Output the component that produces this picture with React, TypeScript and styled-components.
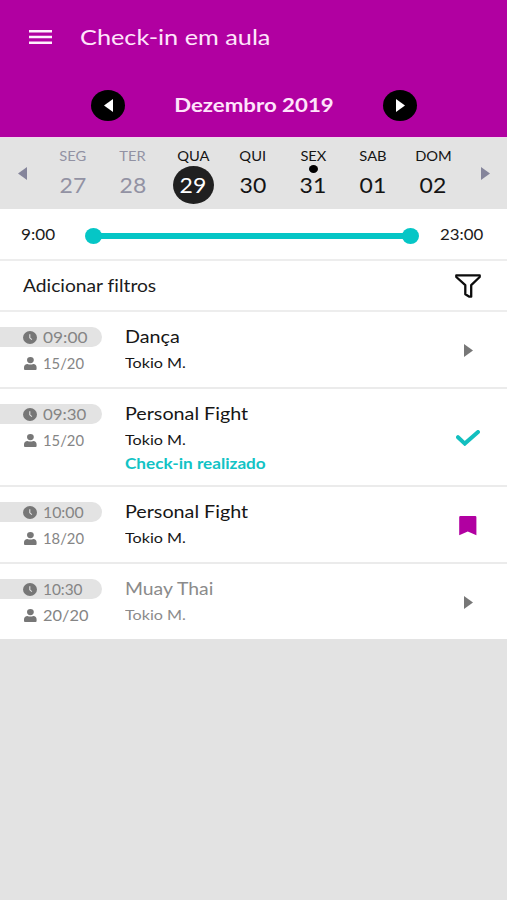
import React from "react";
import styled, { createGlobalStyle, css } from "styled-components";

const purple = "#b100a1";
const teal = "#05c6c6";
const grey = "#e3e3e3";

const GlobalStyle = createGlobalStyle`
  *, *::before, *::after { box-sizing: border-box; }
  body {
    margin: 0;
    background: ${grey};
    font-family: Lato, "Open Sans", sans-serif;
    font-variant-ligatures: none;
    color: #1b1b1b;
  }
  button {
    border: 0;
    padding: 0;
    margin: 0;
    background: none;
    font: inherit;
    color: inherit;
    display: flex;
    align-items: center;
    justify-content: center;
  }
`;

const Screen = styled.main`
  width: 100%;
  min-height: 900px;
  overflow: hidden;
  background: ${grey};
`;

type TextProps = {
  $size: number;
  $stretch?: number;
  $weight?: number;
  $color?: string;
  $line?: number;
  $origin?: string;
};

const Text = styled.span<TextProps>`
  display: block;
  width: max-content;
  white-space: nowrap;
  font-size: ${(p) => p.$size}px;
  line-height: ${(p) => p.$line ?? 24}px;
  font-weight: ${(p) => p.$weight ?? 400};
  color: ${(p) => p.$color ?? "inherit"};
  transform: scaleX(${(p) => p.$stretch ?? 1.1});
  transform-origin: ${(p) => p.$origin ?? "left"} center;
`;

const Header = styled.header`
  height: 137px;
  background: ${purple};
  color: #ffe4fb;
`;

const TitleBar = styled.div`
  display: flex;
  align-items: center;
  height: 74px;
  padding-left: 29px;
  gap: 28px;
`;

const MenuButton = styled.button`
  width: 23px;
  height: 14px;
  svg { display: block; }
`;

const MonthBar = styled.div`
  display: grid;
  grid-template-columns: 34px 1fr 34px;
  align-items: center;
  justify-items: center;
  height: 62px;
  padding: 0 90px 0 91px;
`;

const RoundButton = styled.button`
  width: 34px;
  height: 31px;
  border-radius: 50%;
  background: #000;
`;

const Week = styled.section`
  display: grid;
  grid-template-columns: 43px repeat(7, 60px) 1fr;
  height: 72px;
  border-top: 1px solid #f0d9ee;
`;

const WeekArrow = styled.button`
  height: 70px;
  padding-left: 1px;
`;

const Day = styled.div<{ $muted?: boolean }>`
  display: flex;
  flex-direction: column;
  align-items: center;
  padding-top: 9px;
  color: ${(p) => (p.$muted ? "#9292a3" : "#141414")};
`;

const DayNumber = styled.div<{ $active?: boolean }>`
  position: relative;
  display: flex;
  align-items: center;
  justify-content: center;
  width: 41px;
  height: 38px;
  margin-top: 2px;
  padding-bottom: 1px;
  border-radius: 50%;
  ${(p) => p.$active && css`background: #202020; color: #fff;`}
`;

const EventDot = styled.i`
  position: absolute;
  top: -1px;
  left: 16px;
  width: 9px;
  height: 8px;
  border-radius: 50%;
  background: #000;
`;

const RangeBar = styled.section`
  display: grid;
  grid-template-columns: 64px 334px 1fr;
  align-items: center;
  height: 52px;
  padding: 2px 0 0 21px;
  background: #fff;
  border-bottom: 2px solid #ededed;
`;

const Track = styled.div`
  display: flex;
  align-items: center;
  justify-content: space-between;
  height: 16px;
  margin-top: 1px;
  background: linear-gradient(${teal}, ${teal}) center / 318px 6px no-repeat;
`;

const Thumb = styled.span`
  width: 17px;
  height: 16px;
  border-radius: 50%;
  background: ${teal};
`;

const RangeEnd = styled.div`
  padding-left: 21px;
`;

const FilterBar = styled.section`
  display: flex;
  align-items: center;
  justify-content: space-between;
  height: 51px;
  padding: 0 26px 0 23px;
  background: #fff;
  border-bottom: 2px solid #ededed;
`;

const ClassRow = styled.article<{ $tall?: boolean; $last?: boolean; $muted?: boolean }>`
  display: grid;
  grid-template-columns: 125px 1fr 78px;
  height: ${(p) => (p.$tall ? 98 : p.$last ? 75 : 77)}px;
  background: #fff;
  border-bottom: ${(p) => (p.$last ? 0 : 2)}px solid #ebebeb;
  color: ${(p) => (p.$muted ? "#8b8b8b" : "#161616")};
`;

const Meta = styled.div`
  padding-top: 15px;
  color: #858585;
`;

const MetaLine = styled.div<{ $pill?: boolean }>`
  display: grid;
  grid-template-columns: 14px auto;
  justify-content: start;
  align-items: center;
  gap: 6px;
  width: 102px;
  height: 20px;
  padding-left: 23px;
  border-radius: 0 10px 10px 0;
  background: ${(p) => (p.$pill ? grey : "transparent")};
  & + & { margin-top: 6px; }
  svg { display: block; }
`;

const SeatsLine = styled(MetaLine)`
  height: 21px;
  margin-top: 6px;
  svg { margin-top: -1px; }
`;

const Details = styled.div`
  padding-top: 11px;
`;

const RowAction = styled.button`
  height: 100%;
  padding-top: 2px;
`;

const Triangle = ({ color, left }: { color: string; left?: boolean }) => (
  <svg width="9" height="13" viewBox="0 0 9 13">
    <path d={left ? "M9 0V13L0 6.5Z" : "M0 0V13L9 6.5Z"} fill={color} />
  </svg>
);

const ClockIcon = () => (
  <svg width="14" height="13" viewBox="0 0 14 13">
    <ellipse cx="7" cy="6.5" rx="7" ry="6.5" fill="#777" />
    <path d="M6.8 3.2V6.8L8.9 8.6" fill="none" stroke="#e3e3e3" strokeWidth="1.1" />
  </svg>
);

const PersonIcon = () => (
  <svg width="14" height="13" viewBox="0 0 14 13">
    <ellipse cx="7.4" cy="3.1" rx="3.4" ry="3.1" fill="#777" />
    <path d="M1 12V10.4C1 8.5 2.4 7 4.5 7C6.3 7.8 8.5 7.8 10.3 7C12.4 7 13.6 8.5 13.6 10.4V12Q13.6 13 12.6 13H2Q1 13 1 12Z" fill="#777" />
  </svg>
);

const FunnelIcon = () => (
  <svg width="26" height="24" viewBox="0 0 26 24">
    <path
      d="M1.3 1.3H24.7V3L16.2 11.2V22.7H14.4L10.3 20.2V11.2L1.3 3Z"
      fill="none"
      stroke="#0c0c0c"
      strokeWidth="2.3"
      strokeLinejoin="round"
    />
  </svg>
);

const CheckIcon = () => (
  <svg width="24" height="16" viewBox="0 0 24 16">
    <path d="M2 7.2L8.8 13.6L22 2" fill="none" stroke="#12bfbf" strokeWidth="4" strokeLinecap="round" strokeLinejoin="miter" />
  </svg>
);

const BookmarkIcon = () => (
  <svg width="18" height="20" viewBox="0 0 18 20">
    <path d="M1.4 0H16.2Q17.4 0 17.4 1.2V19.2L8.8 15.4L.2 19.2V1.2Q.2 0 1.4 0Z" fill={purple} />
  </svg>
);

const days = [
  { name: "SEG", num: "27", muted: true },
  { name: "TER", num: "28", muted: true },
  { name: "QUA", num: "29", active: true },
  { name: "QUI", num: "30" },
  { name: "SEX", num: "31", dot: true },
  { name: "SAB", num: "01" },
  { name: "DOM", num: "02" },
];

type Lesson = {
  time: string;
  timeStretch: number;
  seats: string;
  seatsStretch: number;
  name: string;
  nameStretch: number;
  status?: string;
  muted?: boolean;
  action: "open" | "done" | "saved";
};

const lessons: Lesson[] = [
  { time: "09:00", timeStretch: 1.17, seats: "15/20", seatsStretch: 1.02, name: "Dança", nameStretch: 1.16, action: "open" },
  { time: "09:30", timeStretch: 1.14, seats: "15/20", seatsStretch: 1.02, name: "Personal Fight", nameStretch: 1.16, status: "Check-in realizado", action: "done" },
  { time: "10:00", timeStretch: 1.07, seats: "18/20", seatsStretch: 1.02, name: "Personal Fight", nameStretch: 1.16, action: "saved" },
  { time: "10:30", timeStretch: 1.04, seats: "20/20", seatsStretch: 1.13, name: "Muay Thai", nameStretch: 1.14, muted: true, action: "open" },
];

const actionIcons = {
  open: <Triangle color="#777" />,
  done: <CheckIcon />,
  saved: <BookmarkIcon />,
};

export default function App() {
  return (
    <Screen>
      <GlobalStyle />
      <Header>
        <TitleBar>
          <MenuButton aria-label="Menu">
            <svg width="23" height="14" viewBox="0 0 23 14">
              <path d="M0 1.3H23M0 7H23M0 12.7H23" stroke="#fff0fd" strokeWidth="2.5" />
            </svg>
          </MenuButton>
          <Text $size={21.7} $stretch={1.165}>Check-in em aula</Text>
        </TitleBar>
        <MonthBar>
          <RoundButton aria-label="Mês anterior"><Triangle color="#fff" left /></RoundButton>
          <Text $size={19.5} $weight={700} $stretch={1.14} $origin="center">Dezembro 2019</Text>
          <RoundButton aria-label="Próximo mês"><Triangle color="#fff" /></RoundButton>
        </MonthBar>
      </Header>
      <Week>
        <WeekArrow aria-label="Semana anterior"><Triangle color="#85859b" left /></WeekArrow>
        {days.map((d) => (
          <Day key={d.num} $muted={d.muted}>
            <Text $size={14} $stretch={1.05} $line={17} $origin="center">{d.name}</Text>
            <DayNumber $active={d.active}>
              {d.dot && <EventDot />}
              <Text $size={20.5} $stretch={1.12} $origin="center">{d.num}</Text>
            </DayNumber>
          </Day>
        ))}
        <WeekArrow aria-label="Próxima semana"><Triangle color="#85859b" /></WeekArrow>
      </Week>
      <RangeBar>
        <Text $size={14.5} $stretch={1.18}>9:00</Text>
        <Track><Thumb /><Thumb /></Track>
        <RangeEnd><Text $size={14.5} $stretch={1.16}>23:00</Text></RangeEnd>
      </RangeBar>
      <FilterBar>
        <Text $size={17} $stretch={1.13}>Adicionar filtros</Text>
        <FunnelIcon />
      </FilterBar>
      {lessons.map((l, i) => (
        <ClassRow key={l.time} $tall={!!l.status} $last={i === lessons.length - 1} $muted={l.muted}>
          <Meta>
            <MetaLine $pill><ClockIcon /><Text $size={14.8} $line={20} $stretch={l.timeStretch}>{l.time}</Text></MetaLine>
            <SeatsLine><PersonIcon /><Text $size={14.5} $line={21} $stretch={l.seatsStretch}>{l.seats}</Text></SeatsLine>
          </Meta>
          <Details>
            <Text $size={17} $line={27} $stretch={l.nameStretch}>{l.name}</Text>
            <Text $size={14.3} $line={25} $stretch={1.13}>Tokio M.</Text>
            {l.status && <Text $size={14.3} $line={23} $weight={700} $stretch={1.2} $color="#12c3c5">{l.status}</Text>}
          </Details>
          <RowAction aria-label={l.name}>{actionIcons[l.action]}</RowAction>
        </ClassRow>
      ))}
    </Screen>
  );
}
